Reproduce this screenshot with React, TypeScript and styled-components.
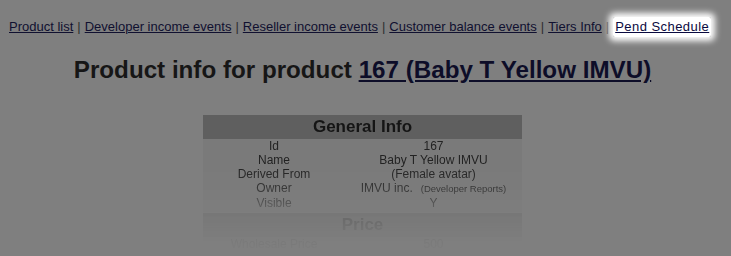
import React from 'react';
import styled, { createGlobalStyle } from 'styled-components';

const GlobalStyle = createGlobalStyle`
  html, body {
    margin: 0;
    padding: 0;
    background: #7f7f7f;
    font-family: "Liberation Sans", Arial, sans-serif;
    overflow: hidden;
  }
`;

const Page = styled.div`
  width: 731px;
  height: 256px;
  padding: 19px 0 0 9px;
  box-sizing: border-box;
`;

const Nav = styled.nav`
  font-size: 13px;
  line-height: 16px;
  color: #2a2a2a;
  white-space: nowrap;
`;

const NavLink = styled.a<{ $spot?: boolean }>`
  color: #101030;
  text-decoration: underline;
  ${p =>
    p.$spot &&
    `
    color: #0a0a40;
    background: #fff;
    padding: 2px 2px 3px;
    letter-spacing: 0.45px;
    box-shadow: 0 0 6px 4px #fff;
    border-radius: 2px;
  `}
`;

const Sep = styled.span`
  color: #2e2e2e;
  margin: 0 4px;
`;

const Heading = styled.h1`
  margin: 20px 0 0;
  padding-right: 15px;
  font-size: 24.2px;
  line-height: 30px;
  font-weight: bold;
  text-align: center;
  color: #161616;

  a {
    color: #0d0d28;
    text-decoration: underline;
  }
`;

const TableWrap = styled.div`
  display: flex;
  justify-content: center;
  margin-top: 30px;
  padding-right: 15px;
`;

const fade = `linear-gradient(
    to bottom,
    #000 52px,
    rgba(0, 0, 0, 0.75) 74px,
    rgba(0, 0, 0, 0.4) 90px,
    rgba(0, 0, 0, 0.2) 102px,
    rgba(0, 0, 0, 0.09) 118px,
    rgba(0, 0, 0, 0.03) 132px
  )`;

const InfoTable = styled.div`
  width: 319px;
  height: 141px;
  overflow: hidden;
  -webkit-mask-image: ${fade};
  mask-image: ${fade};
  background: rgba(0, 0, 0, 0.035);
`;

const Section = styled.div<{ $gap?: number }>`
  height: 24px;
  margin-top: ${p => p.$gap ?? 0}px;
  background: #5f5f5f;
  color: #151515;
  font-size: 17px;
  font-weight: bold;
  line-height: 24px;
  text-align: center;
`;

const Row = styled.div`
  display: grid;
  grid-template-columns: 142px 177px;
  font-size: 12px;
  line-height: 14px;
  color: #222;
  text-align: center;
`;

const Small = styled.span`
  font-size: 9.5px;
  margin-left: 8px;
`;

const rows: [string, React.ReactNode][] = [
  ['Id', '167'],
  ['Name', 'Baby T Yellow IMVU'],
  ['Derived From', '(Female avatar)'],
  [
    'Owner',
    <>
      IMVU inc.<Small>(Developer Reports)</Small>
    </>,
  ],
  ['Visible', 'Y'],
];

export default function App() {
  return (
    <>
      <GlobalStyle />
      <Page>
        <Nav>
          <NavLink>Product list</NavLink>
          <Sep>|</Sep>
          <NavLink>Developer income events</NavLink>
          <Sep>|</Sep>
          <NavLink>Reseller income events</NavLink>
          <Sep>|</Sep>
          <NavLink>Customer balance events</NavLink>
          <Sep>|</Sep>
          <NavLink>Tiers Info</NavLink>
          <Sep>|</Sep>
          <NavLink $spot>Pend Schedule</NavLink>
        </Nav>
        <Heading>
          Product info for product <a>167 (Baby T Yellow IMVU)</a>
        </Heading>
        <TableWrap>
          <InfoTable>
            <Section>General Info</Section>
            {rows.map(([k, v]) => (
              <Row key={k}>
                <span>{k}</span>
                <span>{v}</span>
              </Row>
            ))}
            <Section $gap={3}>Price</Section>
            <Row>
              <span>Wholesale Price</span>
              <span>500</span>
            </Row>
          </InfoTable>
        </TableWrap>
      </Page>
    </>
  );
}
